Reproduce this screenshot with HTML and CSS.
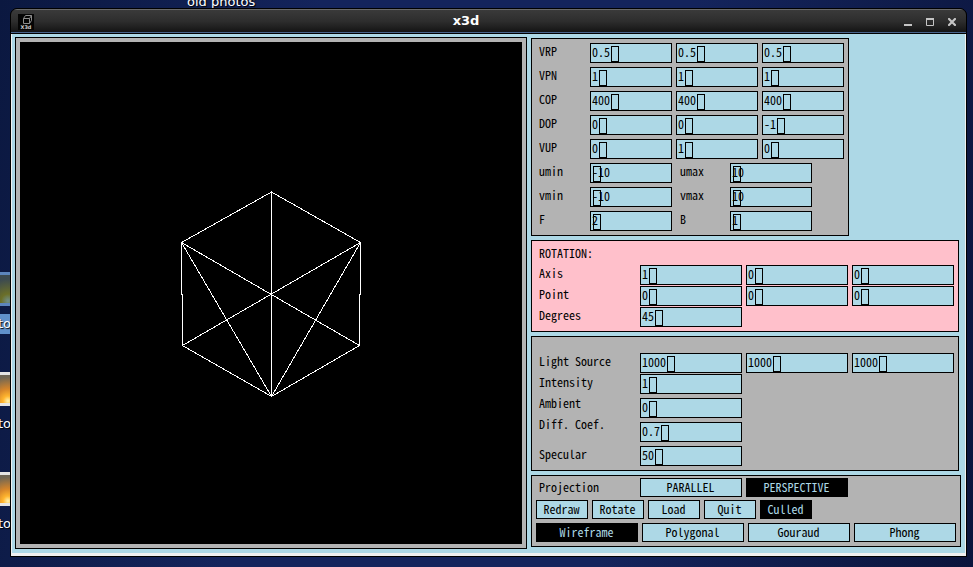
FILE: index.html
```html
<!DOCTYPE html>
<html lang="en">
<head>
<meta charset="utf-8">
<title>x3d</title>
<link rel="stylesheet" href="styles.css">
</head>
<body>
<div class="desk-label desk-top">old photos</div>
<div class="desk-icon icon-a"><span class="thumb dim"></span><span class="desk-label picked">to</span></div>
<div class="desk-icon icon-b"><span class="thumb"></span><span class="desk-label">to</span></div>
<div class="desk-icon icon-c"><span class="thumb"></span><span class="desk-label">to</span></div>

<main class="window">
  <header class="titlebar">
    <svg class="app-icon" viewBox="0 0 16 16" aria-hidden="true">
      <rect width="16" height="16" fill="#050505"/>
      <path d="M5.5 4.500h6v5h-6zM5.500 4.500l2-3h6l-2 3M13.500 1.500v5l-2 3" fill="none" stroke="#8c8c8c"/>
      <text x="8" y="15" text-anchor="middle" class="icon-text">X3d</text>
    </svg>
    <h1>x3d</h1>
    <div class="controls">
      <button type="button" aria-label="Minimize"><svg viewBox="0 0 8 8"><path d="M0 7h8" stroke="#c4c4c4" stroke-width="2"/></svg></button>
      <button type="button" aria-label="Maximize"><svg viewBox="0 0 8 8"><path d="M0 1h8" stroke="#c4c4c4" stroke-width="2"/><path d="M.5 1v6.500h7V1" fill="none" stroke="#c4c4c4"/></svg></button>
      <button type="button" aria-label="Close"><svg viewBox="0 0 8 8"><path d="M1 1l6 6M7 1L1 7" stroke="#c4c4c4" stroke-width="2.200" stroke-linecap="square"/></svg></button>
    </div>
  </header>
  <div class="content">
    <section class="viewport">
      <svg class="scene" viewBox="20 42 502 502" shape-rendering="crispEdges" role="img" aria-label="Wireframe cube">
        <path fill="none" stroke="#fff" d="M271.500 192L181.500 242.500V294.500H182.500V345.500L271.500 396.500L359.500 345.500V294.500H360.500V242.500L271.500 192V396.500M181.500 242.500L359.500 345.500M360.500 242.500L182.500 345.500M181.500 242.500L271.500 396.500L360.500 242.500"/>
      </svg>
    </section>
    <div class="side">
      <section class="panel view">
        <div class="row"><label for="vrp">VRP</label>
          <span class="field" style="--at:3"><input id="vrp" value="0.5"></span><span class="field" style="--at:3"><input aria-label="VRP y" value="0.5"></span><span class="field" style="--at:3"><input aria-label="VRP z" value="0.5"></span></div>
        <div class="row"><label for="vpn">VPN</label>
          <span class="field" style="--at:1"><input id="vpn" value="1"></span><span class="field" style="--at:1"><input aria-label="VPN y" value="1"></span><span class="field" style="--at:1"><input aria-label="VPN z" value="1"></span></div>
        <div class="row"><label for="cop">COP</label>
          <span class="field" style="--at:3"><input id="cop" value="400"></span><span class="field" style="--at:3"><input aria-label="COP y" value="400"></span><span class="field" style="--at:3"><input aria-label="COP z" value="400"></span></div>
        <div class="row"><label for="dop">DOP</label>
          <span class="field" style="--at:1"><input id="dop" value="0"></span><span class="field" style="--at:1"><input aria-label="DOP y" value="0"></span><span class="field" style="--at:2"><input aria-label="DOP z" value="-1"></span></div>
        <div class="row"><label for="vup">VUP</label>
          <span class="field" style="--at:1"><input id="vup" value="0"></span><span class="field" style="--at:1"><input aria-label="VUP y" value="1"></span><span class="field" style="--at:1"><input aria-label="VUP z" value="0"></span></div>
        <div class="row"><label for="umin">umin</label><span class="field" style="--at:0"><input id="umin" value="-10"></span>
          <label class="second" for="umax">umax</label><span class="field" style="--at:0"><input id="umax" value="10"></span></div>
        <div class="row"><label for="vmin">vmin</label><span class="field" style="--at:0"><input id="vmin" value="-10"></span>
          <label class="second" for="vmax">vmax</label><span class="field" style="--at:0"><input id="vmax" value="10"></span></div>
        <div class="row"><label for="front">F</label><span class="field" style="--at:0"><input id="front" value="2"></span>
          <label class="second" for="back">B</label><span class="field" style="--at:0"><input id="back" value="1"></span></div>
      </section>

      <section class="panel rotation">
        <h2>ROTATION:</h2>
        <div class="row"><label for="axis">Axis</label>
          <span class="field" style="--at:1"><input id="axis" value="1"></span><span class="field" style="--at:1"><input aria-label="Axis y" value="0"></span><span class="field" style="--at:1"><input aria-label="Axis z" value="0"></span></div>
        <div class="row"><label for="point">Point</label>
          <span class="field" style="--at:1"><input id="point" value="0"></span><span class="field" style="--at:1"><input aria-label="Point y" value="0"></span><span class="field" style="--at:1"><input aria-label="Point z" value="0"></span></div>
        <div class="row"><label for="deg">Degrees</label><span class="field" style="--at:2"><input id="deg" value="45"></span></div>
      </section>

      <section class="panel light">
        <div class="names">
          <label for="light">Light Source</label>
          <label for="intensity">Intensity</label>
          <label for="ambient">Ambient</label>
          <label for="diff">Diff. Coef.</label>
          <label class="apart" for="spec">Specular</label>
        </div>
        <div class="values">
          <div class="row"><span class="field" style="--at:4"><input id="light" value="1000"></span><span class="field" style="--at:4"><input aria-label="Light y" value="1000"></span><span class="field" style="--at:4"><input aria-label="Light z" value="1000"></span></div>
          <div class="row close"><span class="field" style="--at:1"><input id="intensity" value="1"></span></div>
          <div class="row"><span class="field" style="--at:1"><input id="ambient" value="0"></span></div>
          <div class="row"><span class="field" style="--at:3"><input id="diff" value="0.7"></span></div>
          <div class="row"><span class="field" style="--at:2"><input id="spec" value="50"></span></div>
        </div>
      </section>

      <section class="panel actions">
        <div class="row"><span class="caption">Projection</span><button type="button" class="wide">PARALLEL</button><button type="button" class="wide on">PERSPECTIVE</button></div>
        <div class="row"><button type="button">Redraw</button><button type="button">Rotate</button><button type="button">Load</button><button type="button">Quit</button><button type="button" class="on">Culled</button></div>
        <div class="row last"><button type="button" class="wide on">Wireframe</button><button type="button" class="wide">Polygonal</button><button type="button" class="wide">Gouraud</button><button type="button" class="wide">Phong</button></div>
      </section>
    </div>
  </div>
</main>
</body>
</html>
```
FILE: styles.css
```css
* { box-sizing: border-box; }

:root {
  --sky: #add8e6;
  --gray: #b3b3b3;
  --mono: 12px/20px "Noto Sans CJK SC", "DejaVu Sans Mono", monospace;
}

body {
  margin: 0;
  min-height: 100vh;
  padding: 8px 6px 10px 10px;
  position: relative;
  overflow: hidden;
  background: linear-gradient(100deg, #0b1840 0%, #14245c 30%, #14245c 65%, #0b153c 100%);
}

/* Desktop behind the window */
.desk-label {
  font: 13px/20px "DejaVu Sans", sans-serif;
  color: #fff;
  text-shadow: 1px 1px 1px #000;
  white-space: nowrap;
}
.desk-top {
  position: absolute;
  left: 187px;
  top: -8px;
}
.desk-icon {
  position: absolute;
  left: 0;
  width: 11px;
  display: flex;
  flex-direction: column;
  gap: 8px;
  overflow: hidden;
}
.desk-icon .desk-label { text-indent: -2px; }
.icon-a { top: 272px; }
.icon-b { top: 372px; }
.icon-c { top: 472px; }
.thumb {
  height: 34px;
  border: solid #e4e4e4;
  border-width: 3px 0;
  background: radial-gradient(circle at 8px 26px, #fff3b0 0, #ffb52e 5px, #d6852a 12px, #6f6655 24px);
}
.thumb.dim {
  border-color: #5c85bd;
  background: radial-gradient(circle at 8px 26px, #6f8f8c 0, #6b6f28 7px, #3c4a50 22px);
}
.picked { background: #6090ca; }

/* Window frame */
.window {
  position: relative;
  border: 1px solid #000;
  border-radius: 7px 7px 0 0;
  overflow: hidden;
  background: #000;
}
.titlebar {
  height: 25px;
  display: flex;
  align-items: center;
  padding: 0 10px 0 7px;
  background: linear-gradient(#3a3a3a, #2d2d2d 50%, #121212);
  border-top: 1px solid #6a6a6a;
  border-bottom: 1px solid #000;
  box-shadow: inset 0 -1px #48638c;
}
.app-icon { width: 16px; height: 16px; }
.icon-text {
  font: bold 5px "DejaVu Sans", sans-serif;
  fill: #d0d0d0;
}
h1 {
  flex: 1;
  margin: 0;
  padding: 0 6px 2px 0;
  text-align: center;
  font: bold 13px/20px "DejaVu Sans", sans-serif;
  color: #fff;
}
.controls { display: flex; gap: 14px; }
.controls button {
  width: 8px;
  height: 8px;
  padding: 0;
  border: 0;
  background: none;
  display: flex;
}
.controls svg { width: 8px; height: 8px; }

.content {
  display: flex;
  align-items: flex-start;
  gap: 4px;
  padding: 3px 4px 4px 3px;
  background: var(--sky);
  border: solid #f0f0f0;
  border-width: 0 1px 3px;
}
.viewport {
  flex: 1;
  min-width: 0;
  border: 1px solid #000;
  padding: 4px;
  background: var(--gray);
}
.scene {
  display: block;
  width: 100%;
  aspect-ratio: 1;
  background: #000;
}

/* Parameter panels */
.side {
  flex: none;
  display: flex;
  flex-direction: column;
  align-items: flex-start;
  gap: 4px;
  padding-top: 1px;
  font: var(--mono);
  font-feature-settings: "hwid", "liga" 0;
  color: #000;
}
.panel {
  border: 1px solid #000;
  padding: 4px;
  background: var(--gray);
}
.row { display: flex; gap: 4px; }
label, h2, .caption {
  flex: none;
  margin: 0;
  height: 18px;
  line-height: 16px;
  padding-left: 3px;
  font-size: 12px;
  font-weight: 400;
}
.caption { line-height: 18px; }
.field {
  position: relative;
  flex: none;
  width: 102px;
  height: 20px;
}
.field::after {
  content: "";
  position: absolute;
  top: 3px;
  left: calc(3px + var(--at) * 6px);
  width: 6px;
  height: 14px;
  border: 1px solid #000;
}
input {
  display: block;
  width: 100%;
  height: 20px;
  padding: 0 1px 3px;
  border: 1px solid #000;
  border-radius: 0;
  background: var(--sky);
  color: #000;
  font: inherit;
  line-height: 15px;
  font-feature-settings: inherit;
  outline: 0;
}

.view { display: grid; gap: 4px; }
.view .field { width: 82px; }
.view label { width: 50px; }
.view .second { width: 50px; padding-left: 4px; }

.rotation {
  display: grid;
  gap: 1px;
  background: #ffc0cb;
}
.rotation h2 { height: 19px; }
.rotation label { width: 100px; }

.light {
  display: flex;
  gap: 4px;
  padding-top: 16px;
}
.names {
  width: 100px;
  display: grid;
  align-content: start;
  gap: 3px;
}
.names .apart { margin-top: 9px; }
.values { display: grid; gap: 4px; }
.values .close { margin-top: -3px; }

.actions {
  display: grid;
  gap: 3px;
  padding: 2px 4px 4px;
}
.actions .last { padding-top: 1px; }
.caption { width: 100px; }
.actions button {
  width: 52px;
  height: 19px;
  padding: 0 1px 2px 0;
  border: 1px solid #000;
  border-radius: 0;
  background: var(--sky);
  color: #000;
  font: inherit;
  line-height: 15px;
  font-feature-settings: inherit;
}
.actions .wide { width: 102px; }
.actions .on { background: #000; color: var(--sky); }
```
